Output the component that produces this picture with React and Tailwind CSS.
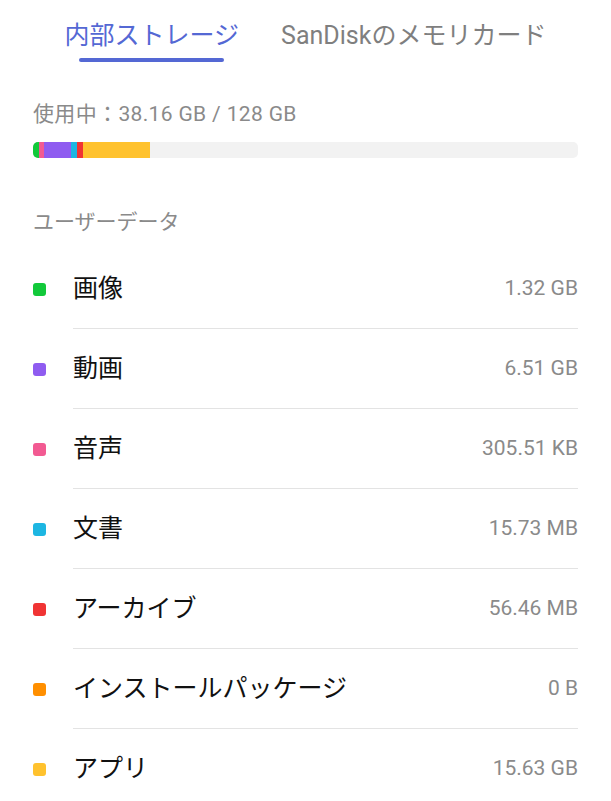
import React from 'react';

const FONT = "font-['Roboto','Noto_Sans_CJK_JP',sans-serif]";

// Usage breakdown — widths in px of the bar
const SEGMENTS = [
  { color: 'bg-[#12c93a]', w: 6 },
  { color: 'bg-[#f25a92]', w: 5 },
  { color: 'bg-[#8f5cf0]', w: 27 },
  { color: 'bg-[#1db6e2]', w: 6 },
  { color: 'bg-[#f03434]', w: 6 },
  { color: 'bg-[#ffc22e]', w: 67 },
];

const ITEMS = [
  { label: '画像', size: '1.32 GB', dot: 'bg-[#12c93a]' },
  { label: '動画', size: '6.51 GB', dot: 'bg-[#8f5cf0]' },
  { label: '音声', size: '305.51 KB', dot: 'bg-[#f25a92]' },
  { label: '文書', size: '15.73 MB', dot: 'bg-[#1db6e2]' },
  { label: 'アーカイブ', size: '56.46 MB', dot: 'bg-[#f03434]' },
  { label: 'インストールパッケージ', size: '0 B', dot: 'bg-[#ff8f00]' },
  { label: 'アプリ', size: '15.63 GB', dot: 'bg-[#ffc22e]' },
];

export default function App() {
  return (
    <div className={`${FONT} w-[611px] h-[801px] bg-white overflow-hidden`}>
      {/* Tabs */}
      <div className="flex justify-center gap-[42px] pt-[20px]">
        <div className="flex flex-col items-center">
          <span className="text-[25px] leading-[32px] text-[#5468d4]">内部ストレージ</span>
          <span className="mt-[6px] h-[4px] w-[145px] rounded-full bg-[#5468d4]" />
        </div>
        <div className="flex flex-col items-center">
          <span className="text-[25px] leading-[32px] text-[#7f7f7f]">SanDiskのメモリカード</span>
        </div>
      </div>

      <div className="px-[33px]">
        <div className="mt-[40px] text-[21px] leading-[24px] tracking-[0.35px] text-[#8a8a8a]">使用中：38.16 GB / 128 GB</div>

        <div className="mt-[16px] flex h-[16px] w-full overflow-hidden rounded-[5px] bg-[#f2f2f2]">
          {SEGMENTS.map((s, i) => (
            <div key={i} className={`${s.color} h-full`} style={{ width: s.w }} />
          ))}
        </div>

        <div className="mt-[52px] text-[21px] leading-[24px] text-[#8a8a8a]">ユーザーデータ</div>

        <div className="mt-[15px]">
          {ITEMS.map((it, i) => (
            <div key={it.label} className="flex h-[80px] items-center">
              <span className={`${it.dot} h-[13px] w-[13px] shrink-0 rounded-[3px]`} />
              <div className={`ml-[27px] flex h-full flex-1 items-center justify-between ${i < ITEMS.length - 1 ? 'border-b border-[#e3e3e3]' : ''}`}>
                <span className="text-[25px] text-[#111]">{it.label}</span>
                <span className="text-[21px] text-[#8a8a8a]">{it.size}</span>
              </div>
            </div>
          ))}
        </div>
      </div>
    </div>
  );
}
